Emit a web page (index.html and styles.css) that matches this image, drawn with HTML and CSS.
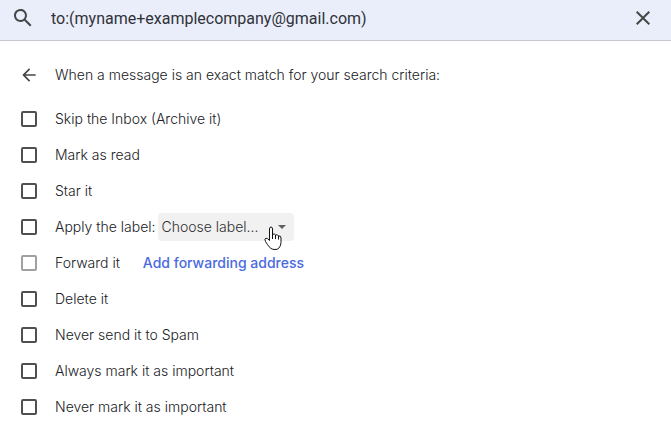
FILE: index.html
```html
<!DOCTYPE html>
<html lang="en">
<head>
    <meta charset="UTF-8">
    <meta name="viewport" content="width=device-width, initial-scale=1.0">
    <title>Create filter</title>
    <link rel="stylesheet" href="styles.css">
</head>
<body>
    <form class="search-bar">
        <button type="submit" class="icon-button" aria-label="Search">
            <svg width="24" height="24" viewBox="0 0 24 24"><path d="M20.5 19 14.7 13.3A6.5 6.5 0 1 0 13.3 14.7L19 20.5zM9.5 14A4.5 4.5 0 1 1 9.5 5a4.5 4.5 0 0 1 0 9z"/></svg>
        </button>
        <input type="text" class="search-input" aria-label="Search mail" value="to:(myname+examplecompany@gmail.com)">
        <button type="reset" class="icon-button" aria-label="Clear search">
            <svg width="24" height="24" viewBox="0 0 24 24"><path d="M19 6.4 17.6 5 12 10.6 6.4 5 5 6.4 10.6 12 5 17.6 6.4 19 12 13.4 17.6 19 19 17.6 13.4 12z"/></svg>
        </button>
    </form>

    <form class="filter">
        <div class="filter-header">
            <button type="button" class="back-button" aria-label="Back">
                <svg width="20" height="20" viewBox="0 0 24 24"><path d="M20 11H7.8l5.6-5.6L12 4l-8 8 8 8 1.4-1.4L7.8 13H20z"/></svg>
            </button>
            <p>When a message is an exact match for your search criteria:</p>
        </div>

        <div class="option">
            <input type="checkbox" id="archive">
            <label for="archive">Skip the Inbox (Archive it)</label>
        </div>
        <div class="option">
            <input type="checkbox" id="read">
            <label for="read">Mark as read</label>
        </div>
        <div class="option">
            <input type="checkbox" id="star">
            <label for="star">Star it</label>
        </div>
        <div class="option">
            <input type="checkbox" id="apply">
            <label for="apply">Apply the label:</label>
            <div class="select-box">
                <select aria-label="Label">
                    <option>Choose label...</option>
                </select>
                <svg class="arrow" width="8" height="4" viewBox="0 0 8 4"><path d="M0 0h8L4 4z"/></svg>
                <svg class="pointer" width="18" height="25" viewBox="0 0 18 25">
                    <path d="M5.500 14V3Q5.500 1 7 1T8.500 3V8.500Q10.500 7 11.500 9Q13.500 8 14.500 10Q17 9.500 17 12V16.500Q17 20 14.500 22.500Q13.500 23.500 11 23.500T7 22.500Q5 21 3.500 18.500L1.500 15.500Q0 12.500 2 12.200Q3.500 12 5.500 14.500z"/>
                    <path d="M8.500 8v5M11.500 9v4M14.500 10v3.500"/>
                </svg>
            </div>
        </div>
        <div class="option">
            <input type="checkbox" id="forward" disabled>
            <label for="forward">Forward it</label>
            <a href="#" class="forward-link">Add forwarding address</a>
        </div>
        <div class="option">
            <input type="checkbox" id="delete">
            <label for="delete">Delete it</label>
        </div>
        <div class="option">
            <input type="checkbox" id="spam">
            <label for="spam">Never send it to Spam</label>
        </div>
        <div class="option">
            <input type="checkbox" id="important">
            <label for="important">Always mark it as important</label>
        </div>
        <div class="option">
            <input type="checkbox" id="not-important">
            <label for="not-important">Never mark it as important</label>
        </div>
    </form>
</body>
</html>
```

FILE: styles.css
```css
* {
    margin: 0;
    padding: 0;
    box-sizing: border-box;
}

body {
    font-family: Inter, sans-serif;
    font-size: 14px;
    font-weight: 300;
    line-height: 20px;
    color: #202124;
    background: #fff;
}

button {
    border: none;
    background: none;
    cursor: pointer;
}

svg {
    display: block;
    fill: #444746;
}

/* Search bar */
.search-bar {
    display: flex;
    align-items: center;
    height: 41px;
    padding: 0 16px 4px 11px;
    background: #eaeefb;
    border-bottom: 1px solid #c6c8d0;
}

.search-input {
    flex: 1;
    min-width: 0;
    margin-left: 16px;
    border: none;
    outline: none;
    background: none;
    font: 400 16px Roboto, sans-serif;
    color: #303238;
}

/* Filter options */
.filter {
    padding: 16px 21px 0;
}

.filter-header {
    display: flex;
    align-items: center;
    height: 36px;
    margin-bottom: 8px;
}

.back-button {
    width: 34px;
    margin-left: -2px;
    margin-right: 2px;
}

.option {
    display: flex;
    align-items: center;
    height: 36px;
}

.option input {
    appearance: none;
    width: 16px;
    height: 16px;
    margin-right: 18px;
    border: 2px solid #505050;
    border-radius: 2px;
}

.option input:checked {
    background: #505050;
}

.option input:disabled {
    border-color: #a0a0a0;
}

.select-box {
    position: relative;
    margin-left: 2px;
}

.select-box select {
    appearance: none;
    width: 136px;
    height: 28px;
    padding: 0 24px 0 4px;
    border: none;
    border-radius: 4px;
    background: #f1f1f1;
    font: inherit;
    color: #303030;
}

.arrow {
    position: absolute;
    top: 12px;
    right: 8px;
    fill: #606060;
}

/* Hand pointer over the drop-down */
.pointer {
    position: absolute;
    top: 13px;
    right: 12px;
    pointer-events: none;
    fill: #fff;
    stroke: #111;
}

.forward-link {
    margin-left: 23px;
    font-weight: 500;
    color: #4a6ae0;
    text-decoration: none;
}
```
